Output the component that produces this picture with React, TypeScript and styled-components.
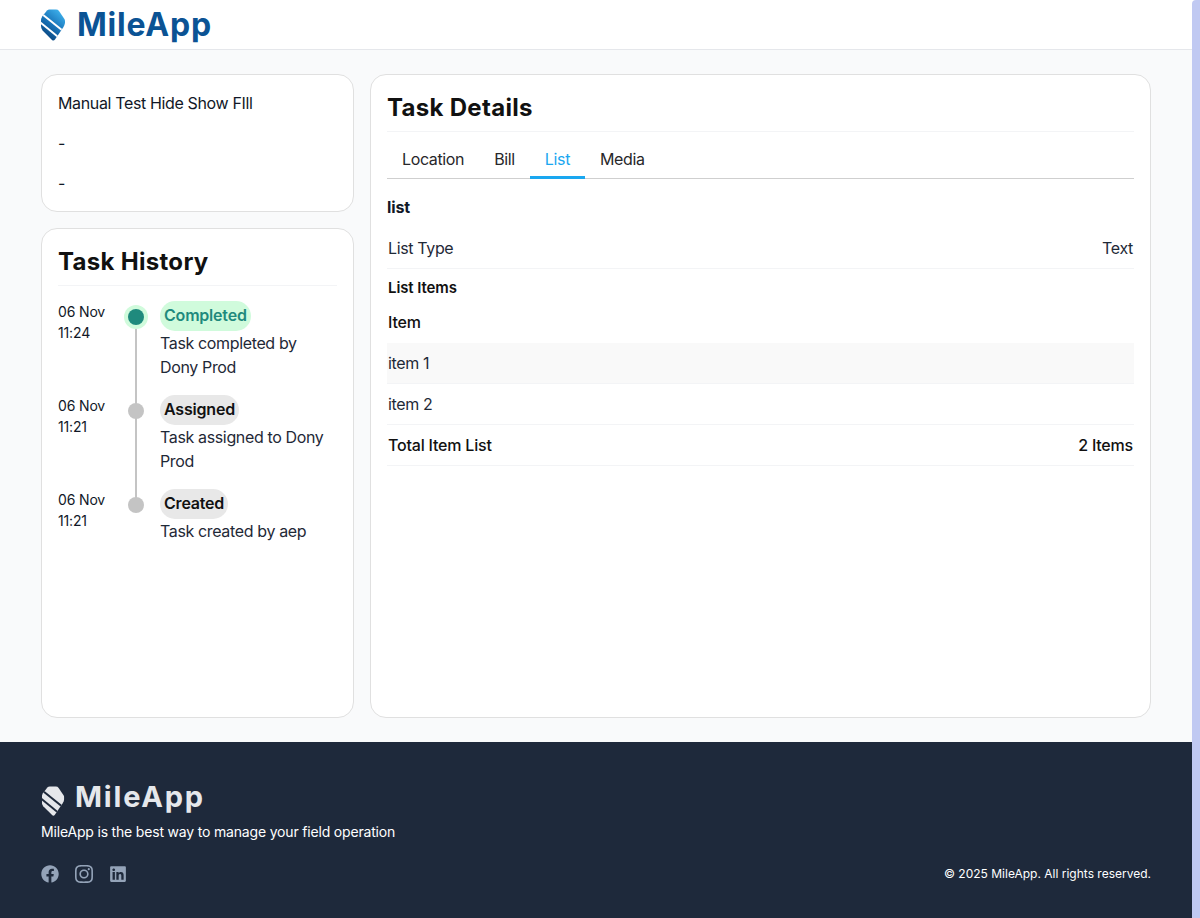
import React from "react";
import styled, { createGlobalStyle } from "styled-components";
import { FaFacebook, FaLinkedin } from "react-icons/fa";
import { SiInstagram } from "react-icons/si";

const Global = createGlobalStyle`
  html, body { margin: 0; padding: 0; background: #fff; }
  * { box-sizing: border-box; }
  body { font-family: Inter, "Liberation Sans", sans-serif; color: #111827; font-size: 16px; line-height: 24px; letter-spacing: -0.36px; }
`;

const Page = styled.div`
  width: 1192px;
  min-height: 918px;
  display: flex;
  flex-direction: column;
  background: #f9fafb;
`;
const Scrollbar = styled.div`
  position: fixed;
  top: 0;
  right: 0;
  width: 8px;
  height: 918px;
  background: #c0c9f2;
  border-radius: 4px 0 0 0;
`;
const Header = styled.header`
  height: 50px;
  background: #fff;
  border-bottom: 1px solid #e5e7eb;
  padding: 0 41px;
  display: flex;
  align-items: center;
`;
const Brand = styled.div<{ $footer?: boolean }>`
  display: flex;
  align-items: ${(p) => (p.$footer ? "flex-start" : "center")};
  gap: ${(p) => (p.$footer ? "10px" : "12px")};
  height: ${(p) => (p.$footer ? "30px" : "32px")};
`;
const BrandName = styled.span<{ $light?: boolean }>`
  font-family: Inter, "Open Sans", sans-serif;
  font-weight: 700;
  font-size: ${(p) => (p.$light ? "29px" : "32px")};
  line-height: ${(p) => (p.$light ? "22px" : "32px")};
  letter-spacing: ${(p) => (p.$light ? "1.8px" : "0.8px")};
  color: ${(p) => (p.$light ? "#e5e7eb" : "#0b5394")};
`;
const Main = styled.main`
  flex: 1;
  display: grid;
  grid-template-columns: 313px 781px;
  gap: 16px;
  padding: 24px 41px;
  height: 692px;
`;
const Column = styled.div`
  display: flex;
  flex-direction: column;
  gap: 16px;
`;
const Card = styled.section<{ $grow?: boolean }>`
  background: #fff;
  border: 1px solid #e0e0e0;
  border-radius: 16px;
  padding: 16px;
  ${(p) => (p.$grow ? "flex: 1;" : "")}
`;
const InfoLine = styled.p`
  margin: 0 0 16px;
  &:last-child { margin: 0; }
`;
const Title = styled.h2`
  margin: 0;
  font-size: 24px;
  line-height: 32px;
  font-weight: 700;
  letter-spacing: 0.3px;
  padding: 1px 0 7px;
  border-bottom: 1px solid #f3f4f6;
  color: #111;
`;
const Timeline = styled.div`
  margin-top: 15px;
  display: flex;
  flex-direction: column;
`;
const Event = styled.div`
  display: grid;
  grid-template-columns: 54px 48px 1fr;
  padding-bottom: 16px;
`;
const When = styled.div`
  font-size: 14px;
  line-height: 21px;
  letter-spacing: -0.15px;
`;
const Track = styled.div`
  position: relative;
  display: flex;
  justify-content: center;
  padding-top: 8px;
`;
const Line = styled.div`
  position: absolute;
  top: 12px;
  bottom: -28px;
  left: 50%;
  width: 2px;
  margin-left: -1px;
  background: #c4c4c4;
`;
const Dot = styled.div<{ $active?: boolean }>`
  position: relative;
  width: 16px;
  height: 16px;
  border-radius: 50%;
  background: ${(p) => (p.$active ? "#1f8a7d" : "#c4c4c4")};
  box-shadow: ${(p) => (p.$active ? "0 0 0 4px #d0fbdc" : "none")};
`;
const Badge = styled.span<{ $active?: boolean }>`
  display: inline-block;
  height: 30px;
  line-height: 28px;
  padding: 0 4px;
  border-radius: 15px;
  font-weight: 600;
  letter-spacing: -0.2px;
  background: ${(p) => (p.$active ? "#d0fbdc" : "#e8e8e8")};
  color: ${(p) => (p.$active ? "#1f8a7d" : "#111")};
`;
const EventText = styled.div`
  color: #1f2937;
`;
const Tabs = styled.div`
  display: flex;
  height: 47px;
  border-bottom: 1px solid #cfcfcf;
`;
const Tab = styled.div<{ $active?: boolean }>`
  padding: 15px 15px 0;
  line-height: 24px;
  margin-bottom: -1px;
  color: ${(p) => (p.$active ? "#1aa7f0" : "#27272a")};
  border-bottom: ${(p) => (p.$active ? "3px solid #1aa7f0" : "none")};
`;
const SectionName = styled.div`
  font-weight: 700;
  line-height: 24px;
  margin: 16px 0 9px;
  font-size: 16px;
  letter-spacing: -0.1px;
`;
const Row = styled.div<{ $shaded?: boolean }>`
  display: flex;
  justify-content: space-between;
  height: 41px;
  line-height: 40px;
  padding: 0 1px;
  border-bottom: 1px solid #f3f4f6;
  background: ${(p) => (p.$shaded ? "#f9f9f9" : "transparent")};
  color: #1f2937;
`;
const TotalRow = styled(Row)`
  font-weight: 500;
  letter-spacing: -0.2px;
  color: #111;
`;
const HeadRow = styled(Row)`
  font-weight: 500;
  letter-spacing: -0.2px;
  color: #111;
  border-bottom: none;
`;
const SubTitle = styled.div`
  font-weight: 600;
  font-size: 15px;
  line-height: 21px;
  letter-spacing: -0.1px;
  padding: 8px 1px 4px;
  color: #111;
`;
const Footer = styled.footer`
  height: 176px;
  background: #1e293b;
  padding: 44px 41px 0;
  color: #fff;
`;
const Tagline = styled.div`
  margin-top: 6px;
  font-size: 14px;
  line-height: 20px;
  letter-spacing: -0.18px;
`;
const FooterBottom = styled.div`
  margin-top: 23px;
  display: flex;
  justify-content: space-between;
  align-items: center;
`;
const Socials = styled.div`
  display: flex;
  gap: 16px;
  color: #94a3b8;
  font-size: 18px;
  line-height: 0;
`;
const Copy = styled.div`
  font-size: 12px;
  line-height: 18px;
  letter-spacing: 0;
`;

const LogoMark = ({ light }: { light?: boolean }) => {
  const id = light ? "l" : "d";
  const gap = light ? "#1e293b" : "#fff";
  return (
    <svg width="24" height={light ? 30 : 32} viewBox="0 0 24 32" aria-hidden="true">
      <defs>
        <clipPath id={`clip-${id}`}>
          <path d="M6 1.6 Q7 0.6 8.5 0.6 L15 0.6 Q17 0.6 18 2 L23.4 10 Q24.4 12 24 14 Q23.6 16 22.5 18 L14 30.6 Q12.6 32.4 11 31 L1.6 21.5 Q0 19.6 0 17 L0 12 Q0 9.5 1.2 7.6 Z" />
        </clipPath>
        <linearGradient id={`g-${id}`} x1="22" y1="4" x2="4" y2="26" gradientUnits="userSpaceOnUse">
          <stop offset="0" stopColor="#3eb1ec" />
          <stop offset="0.55" stopColor="#1873b8" />
          <stop offset="1" stopColor="#0b4a85" />
        </linearGradient>
      </defs>
      <g clipPath={`url(#clip-${id})`}>
        <rect width="24" height="32" fill={light ? "#e5e7eb" : `url(#g-${id})`} />
        <path d="M-1 3.5 L27 26" stroke={gap} strokeWidth="2" />
        <path d="M-3 11.5 L19 29.5" stroke={gap} strokeWidth="2" />
      </g>
    </svg>
  );
};

export default function App() {
  return (
    <Page>
      <Global />
      <Scrollbar />
      <Header>
        <Brand>
          <LogoMark />
          <BrandName>MileApp</BrandName>
        </Brand>
      </Header>
      <Main>
        <Column>
          <Card>
            <InfoLine>Manual Test Hide Show FIll</InfoLine>
            <InfoLine>-</InfoLine>
            <InfoLine>-</InfoLine>
          </Card>
          <Card $grow>
            <Title>Task History</Title>
            <Timeline>
              <Event>
                <When>06 Nov<br />11:24</When>
                <Track><Line /><Dot $active /></Track>
                <div>
                  <Badge $active>Completed</Badge>
                  <EventText>Task completed by Dony Prod</EventText>
                </div>
              </Event>
              <Event>
                <When>06 Nov<br />11:21</When>
                <Track><Line /><Dot /></Track>
                <div>
                  <Badge>Assigned</Badge>
                  <EventText>Task assigned to Dony Prod</EventText>
                </div>
              </Event>
              <Event>
                <When>06 Nov<br />11:21</When>
                <Track><Dot /></Track>
                <div>
                  <Badge>Created</Badge>
                  <EventText>Task created by aep</EventText>
                </div>
              </Event>
            </Timeline>
          </Card>
        </Column>
        <Card>
          <Title>Task Details</Title>
          <Tabs>
            <Tab>Location</Tab>
            <Tab>Bill</Tab>
            <Tab $active>List</Tab>
            <Tab>Media</Tab>
          </Tabs>
          <SectionName>list</SectionName>
          <Row><span>List Type</span><span>Text</span></Row>
          <SubTitle>List Items</SubTitle>
          <HeadRow><span>Item</span></HeadRow>
          <Row $shaded><span>item 1</span></Row>
          <Row><span>item 2</span></Row>
          <TotalRow><span>Total Item List</span><span>2 Items</span></TotalRow>
        </Card>
      </Main>
      <Footer>
        <Brand $footer>
          <LogoMark light />
          <BrandName $light>MileApp</BrandName>
        </Brand>
        <Tagline>MileApp is the best way to manage your field operation</Tagline>
        <FooterBottom>
          <Socials>
            <FaFacebook />
            <SiInstagram />
            <FaLinkedin />
          </Socials>
          <Copy>© 2025 MileApp. All rights reserved.</Copy>
        </FooterBottom>
      </Footer>
    </Page>
  );
}
